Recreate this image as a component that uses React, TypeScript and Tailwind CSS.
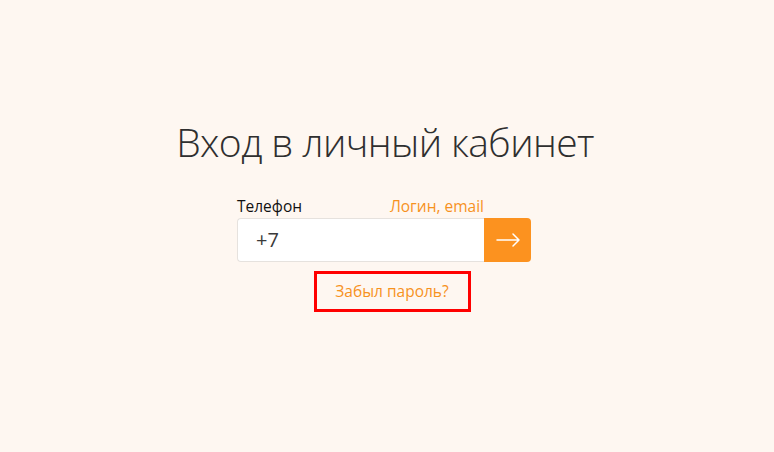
import React from "react";

export default function App() {
  return (
    <div className="w-[774px] h-[452px] bg-[#fef7f1] flex flex-col items-center pt-[116px]" style={{ fontFamily: '"Open Sans", "Noto Sans", sans-serif' }}>
      <h1 className="text-[39px] leading-[52px] font-light text-[#2f2f2f] tracking-[-0.6px] ml-[-4px]">Вход в личный кабинет</h1>
      <div className="w-[294px] mt-[26px] ml-[-6px]">
        <div className="flex justify-between items-end h-[22px] text-[15.5px] leading-[20px]">
          <span className="text-[#111]">Телефон</span>
          <span className="text-[#f7921e] pr-[47px]">Логин, email</span>
        </div>
        <div className="flex h-[44px] mt-[2px]">
          <div className="flex-1 bg-white border border-[#e6e2de] rounded-l-[4px] border-r-0 flex items-center pl-[18px] text-[20px] text-[#3a3a3a]">+7</div>
          <button className="w-[47px] bg-[#fc921f] rounded-r-[4px] flex items-center justify-center">
            <svg width="24" height="14" viewBox="0 0 24 14" fill="none" stroke="white" strokeWidth="1.5" strokeLinecap="round" strokeLinejoin="round">
              <path d="M1 7h22M17 1l6 6-6 6" />
            </svg>
          </button>
        </div>
      </div>
      <div className="mt-[9px] ml-[10px] w-[157px] h-[41px] border-[3px] border-[#ff0000] flex items-center justify-center text-[15.5px] text-[#f7921e]">
        Забыл пароль?
      </div>
    </div>
  );
}
